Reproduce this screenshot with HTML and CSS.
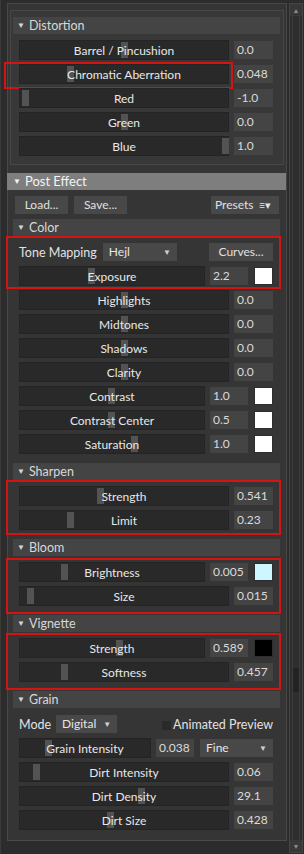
FILE: index.html
```html
<!DOCTYPE html>
<html lang="en">

<head>
    <meta charset="UTF-8" />
    <meta name="viewport" content="width=device-width, initial-scale=1.0" />
    <title>Post Effect</title>
    <link rel="stylesheet" href="styles.css">
</head>

<body>
    <div class="window">
        <div class="panel">
            <!-- Distortion -->
            <div class="group">
                <div class="sec-head"><span class="tri">▼</span>Distortion</div>
                <div class="sec-body">
                    <div class="row">
                        <div class="slider"><span class="thumb" style="left: 101px"></span><span class="label">Barrel / Pincushion</span></div>
                        <div class="value">0.0</div>
                    </div>
                    <div class="row">
                        <div class="mark one">
                            <div class="slider"><span class="thumb" style="left: 47px"></span><span class="label">Chromatic Aberration</span></div>
                        </div>
                        <div class="value">0.048</div>
                    </div>
                    <div class="row">
                        <div class="slider"><span class="thumb" style="left: 2px"></span><span class="label">Red</span></div>
                        <div class="value">-1.0</div>
                    </div>
                    <div class="row">
                        <div class="slider"><span class="thumb" style="left: 101px"></span><span class="label">Green</span></div>
                        <div class="value">0.0</div>
                    </div>
                    <div class="row">
                        <div class="slider"><span class="thumb" style="left: 202px"></span><span class="label">Blue</span></div>
                        <div class="value">1.0</div>
                    </div>
                </div>
            </div>

            <div class="main-head"><span class="tri">▼</span>Post Effect</div>
            <div class="post">
                <div class="toolbar">
                    <div class="btn">Load...</div>
                    <div class="btn">Save...</div>
                    <div class="btn presets">Presets <span class="menu">≡▾</span></div>
                </div>

                <!-- Color -->
                <div class="sec-head"><span class="tri">▼</span>Color</div>
                <div class="sec-body">
                    <div class="mark color">
                        <div class="row">
                            <span class="text">Tone Mapping</span>
                            <div class="drop hejl">Hejl <span class="arrow">▼</span></div>
                            <div class="btn curves">Curves...</div>
                        </div>
                        <div class="row">
                            <div class="slider"><span class="thumb" style="left: 68px"></span><span class="label">Exposure</span></div>
                            <div class="value short">2.2</div>
                            <div class="swatch" style="background: #ffffff"></div>
                        </div>
                    </div>
                    <div class="row">
                        <div class="slider"><span class="thumb" style="left: 101px"></span><span class="label">Highlights</span></div>
                        <div class="value">0.0</div>
                    </div>
                    <div class="row">
                        <div class="slider"><span class="thumb" style="left: 101px"></span><span class="label">Midtones</span></div>
                        <div class="value">0.0</div>
                    </div>
                    <div class="row">
                        <div class="slider"><span class="thumb" style="left: 101px"></span><span class="label">Shadows</span></div>
                        <div class="value">0.0</div>
                    </div>
                    <div class="row">
                        <div class="slider"><span class="thumb" style="left: 101px"></span><span class="label">Clarity</span></div>
                        <div class="value">0.0</div>
                    </div>
                    <div class="row">
                        <div class="slider"><span class="thumb" style="left: 88px"></span><span class="label">Contrast</span></div>
                        <div class="value short">1.0</div>
                        <div class="swatch" style="background: #ffffff"></div>
                    </div>
                    <div class="row">
                        <div class="slider"><span class="thumb" style="left: 88px"></span><span class="label">Contrast Center</span></div>
                        <div class="value short">0.5</div>
                        <div class="swatch" style="background: #ffffff"></div>
                    </div>
                    <div class="row">
                        <div class="slider"><span class="thumb" style="left: 111px"></span><span class="label">Saturation</span></div>
                        <div class="value short">1.0</div>
                        <div class="swatch" style="background: #ffffff"></div>
                    </div>
                </div>

                <!-- Sharpen -->
                <div class="sec-head"><span class="tri">▼</span>Sharpen</div>
                <div class="sec-body">
                    <div class="mark sharpen">
                        <div class="row">
                            <div class="slider"><span class="thumb" style="left: 77px"></span><span class="label">Strength</span></div>
                            <div class="value">0.541</div>
                        </div>
                        <div class="row">
                            <div class="slider"><span class="thumb" style="left: 47px"></span><span class="label">Limit</span></div>
                            <div class="value">0.23</div>
                        </div>
                    </div>
                </div>

                <!-- Bloom -->
                <div class="sec-head"><span class="tri">▼</span>Bloom</div>
                <div class="sec-body">
                    <div class="mark bloom">
                        <div class="row">
                            <div class="slider"><span class="thumb" style="left: 41px"></span><span class="label">Brightness</span></div>
                            <div class="value short">0.005</div>
                            <div class="swatch" style="background: #cdf6ff"></div>
                        </div>
                        <div class="row">
                            <div class="slider"><span class="thumb" style="left: 7px"></span><span class="label">Size</span></div>
                            <div class="value">0.015</div>
                        </div>
                    </div>
                </div>

                <!-- Vignette -->
                <div class="sec-head"><span class="tri">▼</span>Vignette</div>
                <div class="sec-body">
                    <div class="mark vignette">
                        <div class="row">
                            <div class="slider"><span class="thumb" style="left: 96px"></span><span class="label">Strength</span></div>
                            <div class="value short">0.589</div>
                            <div class="swatch" style="background: #000000"></div>
                        </div>
                        <div class="row">
                            <div class="slider"><span class="thumb" style="left: 41px"></span><span class="label">Softness</span></div>
                            <div class="value">0.457</div>
                        </div>
                    </div>
                </div>

                <!-- Grain -->
                <div class="sec-head"><span class="tri">▼</span>Grain</div>
                <div class="sec-body last">
                    <div class="row">
                        <span class="text">Mode</span>
                        <div class="drop digital">Digital <span class="arrow">▼</span></div>
                        <div class="check"><span class="box"></span>Animated Preview</div>
                    </div>
                    <div class="row">
                        <div class="slider"><span class="thumb" style="left: 25px"></span><span class="label">Grain Intensity</span></div>
                        <div class="value short">0.038</div>
                        <div class="drop fine">Fine <span class="arrow">▼</span></div>
                    </div>
                    <div class="row">
                        <div class="slider"><span class="thumb" style="left: 13px"></span><span class="label">Dirt Intensity</span></div>
                        <div class="value">0.06</div>
                    </div>
                    <div class="row">
                        <div class="slider"><span class="thumb" style="left: 118px"></span><span class="label">Dirt Density</span></div>
                        <div class="value">29.1</div>
                    </div>
                    <div class="row">
                        <div class="slider"><span class="thumb" style="left: 87px"></span><span class="label">Dirt Size</span></div>
                        <div class="value">0.428</div>
                    </div>
                </div>
            </div>
        </div>

        <div class="scroll">
            <div class="arrow-up">▲</div>
            <div class="track"><span class="bar" style="top: 652px"></span></div>
            <div class="arrow-down">▼</div>
        </div>
    </div>
</body>

</html>
```

FILE: styles.css
```css
body {
    margin: 0;
    background: #2c2c2c;
    font-family: 'Lato', 'Noto Sans', sans-serif;
    font-size: 12px;
    color: #e4e4e4;
}

.window {
    display: flex;
    height: 854px;
    padding-left: 3px;
    border-left: 1px solid #3a3a3a;
    box-sizing: border-box;
}

.panel {
    width: 280px;
    height: 838px;
    margin: 3px 0 0 3px;
    padding-top: 6px;
    box-sizing: border-box;
    background: #353535;
    border: 1px solid #474747;
    border-bottom-color: #4a4a4a;
}

.group {
    margin: 0 2px;
    padding: 6px 3px 8px 2px;
    border: 1px solid #474747;
    background: #383838;
}

.sec-head {
    height: 17px;
    line-height: 17px;
    background: #444444;
    color: #d8d8d8;
    font-size: 12.5px;
    padding-left: 4px;
}

.tri {
    font-size: 8px;
    margin-right: 4px;
    vertical-align: 2px;
}

.sec-body {
    display: flex;
    flex-direction: column;
    gap: 4px;
    padding: 6px 7px 9px 6px;
}

.group .sec-body {
    padding-bottom: 0;
}

.sec-body.last {
    padding-bottom: 0;
}

.row {
    display: flex;
    align-items: center;
    gap: 5px;
    height: 20px;
}

.slider {
    position: relative;
    flex: 1;
    height: 20px;
    display: flex;
    justify-content: center;
    align-items: center;
    background: #292929;
    border: 1px solid #242424;
    box-sizing: border-box;
}

.thumb {
    position: absolute;
    top: 1px;
    bottom: 1px;
    width: 7px;
    background: #535353;
}

.label {
    position: relative;
    color: #e8e8e8;
}

.value {
    width: 39px;
    height: 18px;
    line-height: 18px;
    padding-left: 3px;
    box-sizing: border-box;
    background: #444444;
    color: #dadada;
}

.value.short {
    width: 38px;
}

.swatch {
    width: 19px;
    height: 18px;
    margin-left: 1px;
    border: 1px solid #2e2e2e;
    box-sizing: border-box;
}

/* red annotation boxes */
.mark {
    display: flex;
    flex-direction: column;
    gap: 4px;
    border: 2px solid #d41313;
}

.mark.one {
    flex: 1;
    height: 20px;
    margin: -2px -4px -5px -15px;
    padding: 0 2px 3px 13px;
}

.mark.one .slider {
    flex: none;
    width: 210px;
}

.mark.color {
    margin: -6px -8px -3px -13px;
    padding: 4px 6px 1px 11px;
}

.mark.sharpen {
    margin: -6px -8px -5px -13px;
    padding: 4px 6px 3px 11px;
}

.mark.bloom {
    margin: -4px -8px -8px -13px;
    padding: 2px 6px 6px 11px;
}

.mark.vignette {
    margin: -5px -8px -8px -13px;
    padding: 3px 6px 6px 11px;
}

.main-head {
    height: 17px;
    line-height: 17px;
    margin: 8px 0 0 -1px;
    padding-left: 6px;
    background: #7e7e7e;
    color: #f4f4f4;
    font-size: 13px;
}

.post {
    padding: 0 6px 0 5px;
}

.toolbar {
    display: flex;
    gap: 6px;
    margin: 6px 1px 5px 2px;
}

.btn {
    height: 18px;
    line-height: 18px;
    padding: 0 6px;
    background: #484848;
    color: #e0e0e0;
    box-sizing: border-box;
}

.toolbar .btn {
    width: 53px;
    text-align: center;
}

.toolbar .presets {
    width: 68px;
    margin-left: auto;
    text-align: left;
    padding: 0 4px;
}

.menu {
    font-size: 11px;
    margin-left: 2px;
}

.text {
    color: #e2e2e2;
    font-size: 12.5px;
}

.drop {
    position: relative;
    height: 18px;
    line-height: 18px;
    padding-left: 6px;
    box-sizing: border-box;
    background: #484848;
    color: #e6e6e6;
}

.drop .arrow {
    position: absolute;
    right: 6px;
    font-size: 8px;
    color: #d0d0d0;
}

.drop.hejl {
    width: 74px;
    margin-left: 1px;
}

.btn.curves {
    width: 64px;
    margin-left: auto;
    text-align: center;
}

.drop.digital {
    width: 61px;
}

.drop.fine {
    width: 73px;
    margin-left: 1px;
}

.check {
    display: flex;
    align-items: center;
    gap: 2px;
    margin-left: auto;
    font-size: 12.5px;
    color: #e2e2e2;
}

.check .box {
    width: 9px;
    height: 9px;
    margin-top: 2px;
    background: #2a2a2a;
}

.scroll {
    display: flex;
    flex-direction: column;
    width: 12px;
    height: 848px;
    margin: 3px 0 0 2px;
    border: 1px solid #454545;
    background: #2e2e2e;
}

.arrow-up,
.arrow-down {
    height: 12px;
    font-size: 7px;
    line-height: 12px;
    text-align: center;
    color: #8a8a8a;
    background: #383838;
}

.track {
    position: relative;
    flex: 1;
    margin: 0 2px;
    border-left: 1px solid #3c3c3c;
    border-right: 1px solid #3c3c3c;
}

.bar {
    position: absolute;
    left: 0;
    right: 0;
    height: 24px;
    background: #232323;
}
```
